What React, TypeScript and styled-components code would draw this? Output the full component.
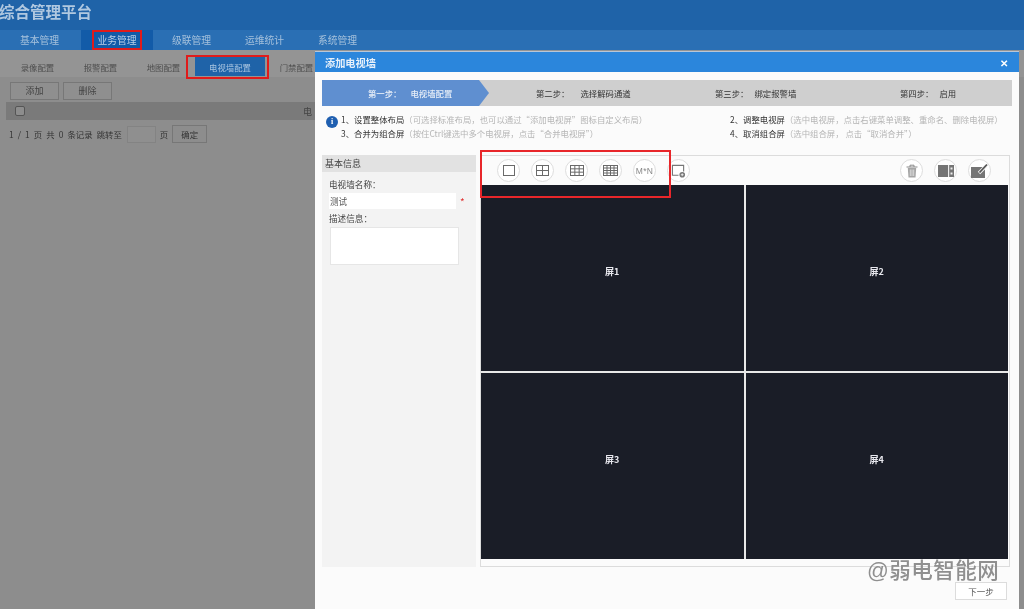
import React from 'react';
import styled, { createGlobalStyle } from 'styled-components';

const navItems = ['基本管理', '业务管理', '级联管理', '运维统计', '系统管理'];
const subTabs = ['录像配置', '报警配置', '地图配置', '电视墙配置', '门禁配置'];
const steps = [
  { label: '第一步：', value: '电视墙配置', gap: 9 },
  { label: '第二步：', value: '选择解码通道', gap: 11 },
  { label: '第三步：', value: '绑定报警墙', gap: 6 },
  { label: '第四步：', value: '启用', gap: 6 },
];
const hints = [
  { head: '1、设置整体布局', note: '（可选择标准布局，也可以通过“添加电视屏”图标自定义布局）' },
  { head: '2、调整电视屏', note: '（选中电视屏，点击右键菜单调整、重命名、删除电视屏）' },
  { head: '3、合并为组合屏', note: '（按住Ctrl键选中多个电视屏，点击“合并电视屏”）' },
  { head: '4、取消组合屏', note: '（选中组合屏， 点击“取消合并”）' },
];

function GridIcon(props: { rows: number; cols: number; width: number }) {
  const w = props.width;
  const h = 11;
  const lines = [];
  for (let i = 1; i < props.rows; i++) {
    const y = 0.5 + (i * (h - 1)) / props.rows;
    lines.push(<line key={'r' + i} x1="0.5" x2={w - 0.5} y1={y} y2={y} />);
  }
  for (let i = 1; i < props.cols; i++) {
    const x = 0.5 + (i * (w - 1)) / props.cols;
    lines.push(<line key={'c' + i} x1={x} x2={x} y1="0.5" y2={h - 0.5} />);
  }
  return (
    <svg width={w} height={h} viewBox={`0 0 ${w} ${h}`} fill="none" stroke="#6a6a6a" strokeWidth="1">
      <rect x="0.5" y="0.5" width={w - 1} height={h - 1} />
      {lines}
    </svg>
  );
}

function AddScreenIcon() {
  return (
    <svg width="15" height="14" viewBox="0 0 16 15" fill="none">
      <path d="M8 12H1.5V1.5H13.5V8" stroke="#777" strokeWidth="1.2" />
      <circle cx="12" cy="11.5" r="3" fill="#777" />
      <path d="M10.5 11.5h3M12 10v3" stroke="#fff" strokeWidth="0.8" />
    </svg>
  );
}

function TrashIcon() {
  return (
    <svg width="12" height="14" viewBox="0 0 12 14" fill="none">
      <path d="M0.5 3h11M4 3V1.2h4V3" stroke="#8a8a8a" strokeWidth="1" />
      <path d="M1.8 4h8.4l-.7 9.5H2.5z" fill="#a5a5a5" />
      <path d="M4.3 5.5v6.5M6 5.5v6.5M7.7 5.5v6.5" stroke="#efefef" strokeWidth="0.7" />
    </svg>
  );
}

function SplitIcon() {
  return (
    <svg width="16" height="12" viewBox="0 0 16 12">
      <rect width="16" height="12" fill="#757575" />
      <rect x="10" y="0" width="1.2" height="12" fill="#eee" />
      <rect x="12.5" y="2.5" width="2" height="2" fill="#eee" />
      <rect x="12.5" y="7.5" width="2" height="2" fill="#eee" />
    </svg>
  );
}

function EditScreenIcon() {
  return (
    <svg width="17" height="15" viewBox="0 0 17 15">
      <rect x="0" y="4" width="14" height="11" fill="#757575" />
      <path d="M8 10 15 3" stroke="#f4f4f4" strokeWidth="3.4" />
      <path d="M8.5 9.5 16 1.5" stroke="#555" strokeWidth="1.8" />
    </svg>
  );
}

export default function App() {
  return (
    <Page>
      <GlobalStyle />
      <Header>
        <Title>综合管理平台</Title>
        <Nav>
          {navItems.map((item, i) => (
            <NavItem key={item} $active={i === 1}>
              <NavLabel $active={i === 1}>{item}</NavLabel>
            </NavItem>
          ))}
        </Nav>
      </Header>
      <SubTabs>
        {subTabs.map((tab, i) => (
          <SubTab key={tab} $active={i === 3}>{tab}</SubTab>
        ))}
      </SubTabs>
      <Actions>
        <GhostButton>添加</GhostButton>
        <GhostButton>删除</GhostButton>
      </Actions>
      <TableHead>
        <HeadCheck />
        <HeadText>电</HeadText>
      </TableHead>
      <Pager>
        <span>1 / 1 页 共 0 条记录 跳转至</span>
        <PagerInput />
        <span>页</span>
        <PagerButton>确定</PagerButton>
      </Pager>

      <Modal>
        <ModalTitle>
          <span>添加电视墙</span>
          <Close>✕</Close>
        </ModalTitle>
        <Steps>
          {steps.map((step, i) => (
            <Step key={step.label} $active={i === 0} $gap={step.gap}>
              <span>{step.label}</span>
              <span>{step.value}</span>
            </Step>
          ))}
        </Steps>
        <HintArea>
          <InfoBadge>i</InfoBadge>
          <HintGrid>
            {hints.map((hint) => (
              <Hint key={hint.head}>
                <HintHead>{hint.head}</HintHead>
                <HintNote>{hint.note}</HintNote>
              </Hint>
            ))}
          </HintGrid>
        </HintArea>
        <Body>
          <InfoPanel>
            <PanelHead>基本信息</PanelHead>
            <FieldLabel>电视墙名称：</FieldLabel>
            <NameRow>
              <NameInput>测试</NameInput>
              <Required>*</Required>
            </NameRow>
            <FieldLabel>描述信息：</FieldLabel>
            <DescBox />
          </InfoPanel>
          <WallPanel>
            <Toolbar>
              <ToolGroup>
                <RoundTool><GridIcon rows={1} cols={1} width={12} /></RoundTool>
                <RoundTool><GridIcon rows={2} cols={2} width={13} /></RoundTool>
                <RoundTool><GridIcon rows={3} cols={3} width={14} /></RoundTool>
                <RoundTool><GridIcon rows={4} cols={4} width={15} /></RoundTool>
                <RoundTool><MnText>M*N</MnText></RoundTool>
                <RoundTool><AddScreenIcon /></RoundTool>
              </ToolGroup>
              <ToolGroup>
                <RoundTool><TrashIcon /></RoundTool>
                <RoundTool><SplitIcon /></RoundTool>
                <RoundTool><EditScreenIcon /></RoundTool>
              </ToolGroup>
            </Toolbar>
            <Wall>
              {[1, 2, 3, 4].map((n) => (
                <Screen key={n}>屏{n}</Screen>
              ))}
            </Wall>
            <ToolHighlight />
          </WallPanel>
        </Body>
        <Footer>
          <NextButton>下一步</NextButton>
        </Footer>
        <Watermark>@弱电智能网</Watermark>
      </Modal>
    </Page>
  );
}

const GlobalStyle = createGlobalStyle`
  html, body {
    margin: 0;
    padding: 0;
    background: #8d8d8d;
  }
  * {
    box-sizing: border-box;
  }
`;

const Page = styled.div`
  position: relative;
  width: 1024px;
  height: 609px;
  overflow: hidden;
  background: #8d8d8d;
  color: #3a3a3a;
  font-family: "Noto Sans CJK SC", "Liberation Sans", sans-serif;
  filter: blur(0.35px);
`;

const Header = styled.div`
  height: 50px;
  display: flex;
  flex-direction: column;
  background: #1f63a8;
`;

const Title = styled.div`
  height: 30px;
  margin-left: -1px;
  font-size: 15.5px;
  line-height: 22px;
  font-weight: 700;
  color: #b0c8e0;
`;

const Nav = styled.div`
  height: 20px;
  display: flex;
  padding-left: 3px;
  background: #2a6fb4;
`;

const NavItem = styled.div<{ $active?: boolean }>`
  width: ${(p) => (p.$active ? '72px' : '73px')};
  margin: ${(p) => (p.$active ? '0 2px 0 5px' : '0')};
  display: flex;
  align-items: center;
  justify-content: center;
  background: ${(p) => (p.$active ? '#125ba8' : 'transparent')};
`;

const NavLabel = styled.span<{ $active?: boolean }>`
  font-size: 9.8px;
  line-height: 16px;
  padding: 0 3px;
  color: ${(p) => (p.$active ? '#b9cfe6' : '#a5c1dc')};
  border: ${(p) => (p.$active ? '2px solid #e01b1b' : '2px solid transparent')};
`;

const SubTabs = styled.div`
  height: 27px;
  padding: 7px 0 0 6px;
  display: flex;
  background: #949494;
`;

const SubTab = styled.div<{ $active?: boolean }>`
  position: relative;
  width: ${(p) => (p.$active ? '70px' : '63px')};
  height: 19px;
  display: flex;
  align-items: center;
  justify-content: center;
  font-size: 8.4px;
  color: ${(p) => (p.$active ? '#a8c4e0' : '#4f4f4f')};
  background: ${(p) => (p.$active ? '#1f63a8' : 'transparent')};

  ${(p) => p.$active && `
    &::after {
      content: '';
      position: absolute;
      inset: -2px -4px -3px -9px;
      border: 2px solid #e01b1b;
    }
  `}
`;

const Actions = styled.div`
  display: flex;
  gap: 4px;
  padding: 5px 0 0 10px;
`;

const GhostButton = styled.div`
  width: 49px;
  height: 18px;
  font-size: 9px;
  line-height: 16px;
  text-align: center;
  color: #444;
  border: 1px solid #777;
  background: #8f8f8f;
`;

const TableHead = styled.div`
  margin: 2px 0 0 6px;
  width: 309px;
  height: 18px;
  padding: 0 3px 0 9px;
  display: flex;
  align-items: center;
  justify-content: space-between;
  background: #7a7a7a;
`;

const HeadCheck = styled.div`
  width: 10px;
  height: 10px;
  border: 1px solid #555;
  border-radius: 2px;
  background: #8d8d8d;
`;

const HeadText = styled.span`
  font-size: 9px;
  color: #444;
`;

const Pager = styled.div`
  margin-top: 5px;
  padding-left: 9px;
  display: flex;
  align-items: center;
  height: 18px;
  font-size: 8.4px;
  word-spacing: 2.2px;
  color: #333;
`;

const PagerInput = styled.div`
  width: 29px;
  height: 17px;
  margin: 0 4px 0 5px;
  background: #8f8f8f;
  border: 1px solid #838383;
`;

const PagerButton = styled.div`
  width: 35px;
  height: 18px;
  margin-left: 4px;
  line-height: 16px;
  text-align: center;
  border: 1px solid #777;
`;

const Modal = styled.div`
  position: absolute;
  left: 315px;
  top: 51px;
  width: 704px;
  height: 558px;
  display: flex;
  flex-direction: column;
  background: #fbfbfb;
  border-top: 1px solid #b9c6d6;
`;

const ModalTitle = styled.div`
  height: 20px;
  flex: none;
  padding: 0 11px 0 10px;
  display: flex;
  align-items: center;
  justify-content: space-between;
  font-size: 10.2px;
  font-weight: 700;
  color: #e6f0fa;
  background: #2b86dc;
`;

const Close = styled.span`
  font-size: 10px;
  font-weight: 700;
  color: #fff;
`;

const Steps = styled.div`
  margin: 8px 7px 0;
  height: 26px;
  flex: none;
  display: grid;
  grid-template-columns: 167px 179px 185px 1fr;
  background: #cfcfcf;
`;

const Step = styled.div<{ $active?: boolean; $gap: number }>`
  display: flex;
  align-items: center;
  gap: ${(p) => p.$gap}px;
  padding-left: ${(p) => (p.$active ? '46px' : '47px')};
  font-size: 8.4px;
  font-weight: ${(p) => (p.$active ? 500 : 400)};
  color: ${(p) => (p.$active ? '#e8eff8' : '#333')};
  background: ${(p) => (p.$active ? '#5f8fd0' : 'transparent')};
  ${(p) => p.$active && 'clip-path: polygon(0 0, 157px 0, 100% 50%, 157px 100%, 0 100%);'}
`;

const HintArea = styled.div`
  position: relative;
  flex: none;
  height: 49px;
  padding: 7px 0 0 26px;
`;

const InfoBadge = styled.div`
  position: absolute;
  left: 11px;
  top: 10px;
  width: 12px;
  height: 12px;
  border-radius: 50%;
  background: #1f5fb0;
  color: #fff;
  font-size: 8px;
  font-weight: 700;
  line-height: 12px;
  text-align: center;
  font-family: "Liberation Serif", serif;
`;

const HintGrid = styled.div`
  display: grid;
  grid-template-columns: 389px 1fr;
`;

const Hint = styled.div`
  height: 13.5px;
  line-height: 13.5px;
  font-size: 8.4px;
  white-space: nowrap;
`;

const HintHead = styled.span`
  color: #333;
`;

const HintNote = styled.span`
  color: #b5b5b5;
`;

const Body = styled.div`
  flex: none;
  height: 412px;
  margin: 0 9px 0 7px;
  display: flex;
  gap: 4px;
`;

const InfoPanel = styled.div`
  width: 154px;
  display: flex;
  flex-direction: column;
  padding-bottom: 8px;
  background: #f3f3f3;
`;

const PanelHead = styled.div`
  height: 17px;
  padding-left: 3px;
  font-size: 9px;
  line-height: 17px;
  color: #444;
  background: #e2e2e2;
  margin-bottom: 5px;
`;

const FieldLabel = styled.div`
  height: 14px;
  padding-left: 7px;
  font-size: 8.6px;
  line-height: 14px;
  color: #444;
`;

const NameRow = styled.div`
  display: flex;
  align-items: center;
  height: 18px;
  margin: 1px 0 1px;
  padding-left: 7px;
`;

const NameInput = styled.div`
  width: 127px;
  height: 16px;
  padding-left: 1px;
  font-size: 8.6px;
  line-height: 16px;
  color: #555;
  background: #fff;
`;

const Required = styled.span`
  margin-left: 4px;
  font-size: 10px;
  color: #e03030;
`;

const DescBox = styled.div`
  width: 129px;
  height: 38px;
  margin: 2px 0 0 8px;
  background: #fff;
  border: 1px solid #e6e6e6;
`;

const WallPanel = styled.div`
  position: relative;
  flex: 1;
  display: flex;
  flex-direction: column;
  padding: 0 1px 7px 0;
  border: 1px solid #dcdcdc;
`;

const Toolbar = styled.div`
  flex: none;
  height: 29px;
  padding: 0 17px 0 16px;
  display: flex;
  align-items: center;
  justify-content: space-between;
`;

const ToolGroup = styled.div`
  display: flex;
  gap: 11px;
`;

const RoundTool = styled.div`
  width: 23px;
  height: 23px;
  display: flex;
  align-items: center;
  justify-content: center;
  border-radius: 50%;
  background: #fff;
  border: 1px solid #dedede;
`;

const MnText = styled.span`
  font-size: 8.5px;
  letter-spacing: 0.3px;
  color: #888;
  font-family: "Liberation Sans", sans-serif;
`;

const Wall = styled.div`
  flex: 1;
  display: grid;
  grid-template-columns: 1fr 1fr;
  grid-template-rows: 1fr 1fr;
  gap: 2px;
  background: #e8e8e8;
`;

const Screen = styled.div`
  display: flex;
  align-items: center;
  justify-content: center;
  padding-bottom: 14px;
  font-size: 9px;
  font-weight: 700;
  color: #e8e8ee;
  background: #1a1d27;
`;

const ToolHighlight = styled.div`
  position: absolute;
  left: -1px;
  top: -6px;
  width: 191px;
  height: 48px;
  border: 2px solid #e8262a;
`;

const Footer = styled.div`
  flex: 1;
  display: flex;
  justify-content: flex-end;
  padding: 15px 12px 0 0;
`;

const NextButton = styled.div`
  width: 52px;
  height: 18px;
  font-size: 8.5px;
  line-height: 16px;
  text-align: center;
  color: #555;
  background: #fff;
  border: 1px solid #dcdcdc;
`;

const Watermark = styled.div`
  position: absolute;
  left: 552px;
  top: 506px;
  font-size: 21.5px;
  font-weight: 500;
  line-height: 26px;
  letter-spacing: 0.5px;
  color: #8f8f8f;
  font-family: "Liberation Sans", "Noto Sans CJK SC", sans-serif;
`;
